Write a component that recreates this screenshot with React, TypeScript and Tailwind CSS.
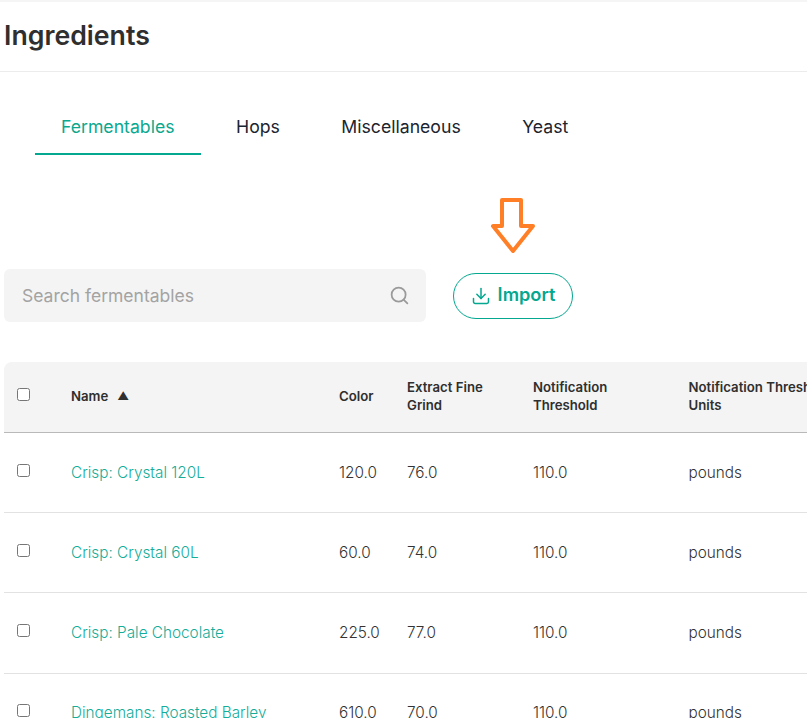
import { Download, Search } from "lucide-react";

const rows = [
  { cells: ["Crisp: Crystal 120L", "120.0", "76.0", "110.0", "pounds"], row: "h-20", check: "pt-[31px]", text: "pt-[3px]" },
  { cells: ["Crisp: Crystal 60L", "60.0", "74.0", "110.0", "pounds"], row: "h-20", check: "pt-[31px]", text: "pt-[3px]" },
  { cells: ["Crisp: Pale Chocolate", "225.0", "77.0", "110.0", "pounds"], row: "h-[81px]", check: "pt-[31px]", text: "pt-[2px]" },
  { cells: ["Dingemans: Roasted Barley", "610.0", "70.0", "110.0", "pounds"], row: "h-20", check: "pt-[30px]", text: "pt-[1px]" },
];

const Check = () => (
  <span className="block w-[13px] h-[13px] rounded-[2.5px] border border-[#767676] bg-white" />
);

export default function App() {
  return (
    <div className="w-[807px] h-[718px] overflow-hidden bg-white text-[#2f2f2f] font-['Inter',sans-serif]">
      <header className="h-[72px] border-t-2 border-t-[#f5f5f5] border-b border-b-[#ececec] pl-1 pb-[3px] flex items-center">
        <h1 className="text-[26.7px] leading-[32px] font-semibold text-[#2f2f2f]">Ingredients</h1>
      </header>

      <nav className="mt-[34px] ml-[35px] flex gap-[9.5px] h-[49px]">
        <a className="px-[26px] h-full text-[17.65px] leading-[42px] text-[#0aa88f] border-b-2 border-[#04a78f]">Fermentables</a>
        <a className="px-[26px] h-full text-[17.65px] leading-[42px] text-[#1b2431]">Hops</a>
        <a className="px-[26px] h-full text-[17.65px] leading-[42px] text-[#1b2431]">Miscellaneous</a>
        <a className="px-[26px] h-full text-[17.65px] leading-[42px] text-[#1b2431]">Yeast</a>
      </nav>

      <div className="mt-[114px] ml-1 flex items-center gap-[27px] h-[53px]">
        <div className="w-[422px] h-[53px] rounded-md bg-[#f4f4f4] pl-[18px] pr-4 flex items-center justify-between">
          <span className="text-[17.5px] leading-[26px] pt-[1px] text-[#a3a3a3]">Search fermentables</span>
          <Search size={21} strokeWidth={2} className="text-[#9a9a9a]" />
        </div>
        <div className="relative">
          <button className="w-[120px] h-[46px] rounded-full border border-[#04a78f] flex items-center justify-center gap-[7px] text-[#04a78f] text-[18.2px] font-semibold">
            <Download size={20} strokeWidth={1.8} />
            <span className="pb-[1px]">Import</span>
          </button>
          <svg className="absolute left-[37px] top-[-76px]" width="46" height="60" viewBox="0 0 46 60" fill="none">
            <path d="M12 3H31V29H43L23 54L3 29H12Z" stroke="#ff7f27" strokeWidth="4" strokeLinejoin="round" />
          </svg>
        </div>
      </div>

      <div className="mt-10 ml-1 w-[1100px]">
        <table className="table-fixed w-full border-collapse text-left">
          <colgroup>
            <col className="w-[67px]" />
            <col className="w-[268px]" />
            <col className="w-[68px]" />
            <col className="w-[126px]" />
            <col className="w-[155.5px]" />
            <col />
          </colgroup>
          <thead>
            <tr className="h-[70px] bg-[#f4f4f4] border-b border-[#b9b9b9] text-[13.2px] leading-[18px] font-semibold text-[#2f2f2f]">
              <th className="pl-[13px] font-semibold rounded-tl-lg align-top pt-[26px]"><Check /></th>
              <th className="font-semibold pb-[2px]">
                <span className="flex items-center gap-[9px]">Name <span className="text-[11.5px]">▲</span></span>
              </th>
              <th className="font-semibold pb-[2px]">Color</th>
              <th className="font-semibold pb-[2px]">Extract Fine<br />Grind</th>
              <th className="font-semibold pb-[2px]">Notification<br />Threshold</th>
              <th className="font-semibold whitespace-nowrap pb-[2px]">Notification Threshold<br />Units</th>
            </tr>
          </thead>
          <tbody>
            {rows.map((r) => (
              <tr key={r.cells[0]} className={`${r.row} border-b border-[#e2e2e2] text-[15.3px] font-light text-[#333333]`}>
                <td className={`pl-[13px] align-top ${r.check}`}><Check /></td>
                <td className={`${r.text} text-[#14ad9a]`}>{r.cells[0]}</td>
                <td className={r.text}>{r.cells[1]}</td>
                <td className={r.text}>{r.cells[2]}</td>
                <td className={r.text}>{r.cells[3]}</td>
                <td className={r.text}>{r.cells[4]}</td>
              </tr>
            ))}
          </tbody>
        </table>
      </div>
    </div>
  );
}
